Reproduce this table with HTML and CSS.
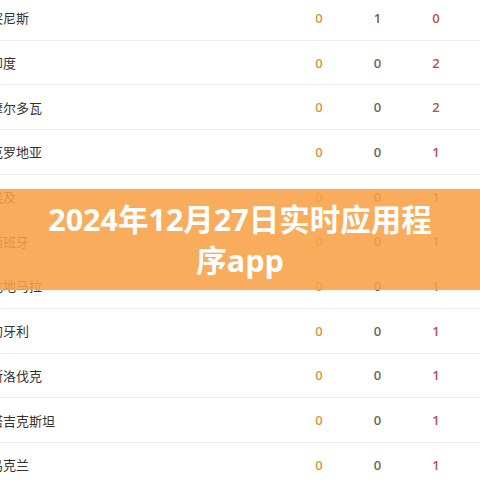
FILE: index.html
```html
<!DOCTYPE html>
<html lang="zh">
<head>
<meta charset="utf-8">
<title>2024年12月27日实时应用程序app</title>
<link rel="stylesheet" href="styles.css">
</head>
<body>
<div class="page">
  <div class="medal-table">
    <div class="row"><span class="name">突尼斯</span><span class="num gold">0</span><span class="num silver">1</span><span class="num bronze">0</span></div>
    <div class="row"><span class="name">印度</span><span class="num gold">0</span><span class="num silver">0</span><span class="num bronze">2</span></div>
    <div class="row"><span class="name">摩尔多瓦</span><span class="num gold">0</span><span class="num silver">0</span><span class="num bronze">2</span></div>
    <div class="row"><span class="name">克罗地亚</span><span class="num gold">0</span><span class="num silver">0</span><span class="num bronze">1</span></div>
    <div class="row"><span class="name">埃及</span><span class="num gold">0</span><span class="num silver">0</span><span class="num bronze">1</span></div>
    <div class="row"><span class="name">西班牙</span><span class="num gold">0</span><span class="num silver">0</span><span class="num bronze">1</span></div>
    <div class="row"><span class="name">危地马拉</span><span class="num gold">0</span><span class="num silver">0</span><span class="num bronze">1</span></div>
    <div class="row"><span class="name">匈牙利</span><span class="num gold">0</span><span class="num silver">0</span><span class="num bronze">1</span></div>
    <div class="row"><span class="name">斯洛伐克</span><span class="num gold">0</span><span class="num silver">0</span><span class="num bronze">1</span></div>
    <div class="row"><span class="name">塔吉克斯坦</span><span class="num gold">0</span><span class="num silver">0</span><span class="num bronze">1</span></div>
    <div class="row"><span class="name">乌克兰</span><span class="num gold">0</span><span class="num silver">0</span><span class="num bronze">1</span></div>
  </div>
  <div class="banner">
    <h1 class="banner-title">2024年12月27日实时应用程序app</h1>
  </div>
</div>
</body>
</html>
```

FILE: styles.css
```css
html, body {
  margin: 0;
  padding: 0;
  background: #ffffff;
}

body {
  width: 480px;
  height: 480px;
  overflow: hidden;
  font-family: "Noto Sans CJK SC", "Open Sans", sans-serif;
}

.page {
  position: relative;
  width: 480px;
  height: 480px;
  overflow: hidden;
}

.medal-table {
  margin-top: -4px;
  margin-left: -10px;
  width: 490px;
}

.row {
  display: grid;
  grid-template-columns: 300px 58px 59px 58px 1fr;
  align-items: center;
  height: 44.7px;
  box-sizing: border-box;
  border-bottom: 1px solid #ebebeb;
}

.name {
  font-size: 13px;
  color: #333333;
  white-space: nowrap;
}

.num {
  text-align: center;
  font-family: "Open Sans", sans-serif;
  font-weight: 600;
  font-size: 13px;
}

.gold { color: #cf9a3f; }
.silver { color: #666666; }
.bronze { color: #b5524c; }

.banner {
  position: absolute;
  left: 0;
  top: 189px;
  width: 480px;
  height: 101px;
  background: rgba(248, 160, 70, 0.88);
  display: flex;
  align-items: center;
  justify-content: center;
}

.banner-title {
  margin: 0;
  width: 400px;
  text-align: center;
  color: #ffffff;
  font-family: "Open Sans", "Noto Sans CJK SC", sans-serif;
  font-weight: 700;
  font-size: 30.5px;
  line-height: 41px;
}
```
